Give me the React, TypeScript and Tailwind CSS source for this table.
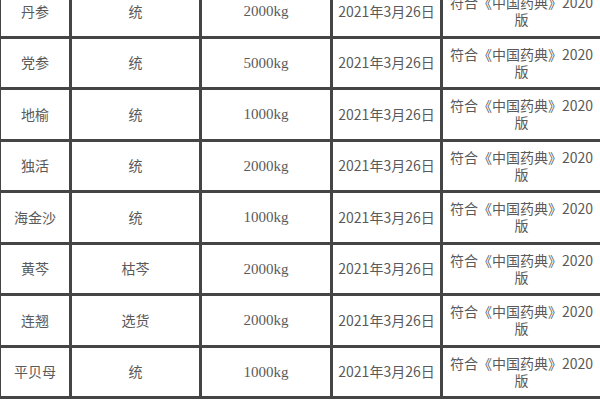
import React from 'react';

const rows = [
  ['丹参', '统', '2000kg'],
  ['党参', '统', '5000kg'],
  ['地榆', '统', '1000kg'],
  ['独活', '统', '2000kg'],
  ['海金沙', '统', '1000kg'],
  ['黄芩', '枯芩', '2000kg'],
  ['连翘', '选货', '2000kg'],
  ['平贝母', '统', '1000kg'],
];

const cjk = { fontFamily: '"Noto Sans CJK SC", "Noto Sans", sans-serif' };
const serif = { fontFamily: '"Liberation Serif", "Noto Sans CJK SC", serif' };

export default function App() {
  return (
    <div className="w-[600px] h-[400px] overflow-hidden bg-white">
      <table className="table-fixed border-collapse w-[602px] -mt-[16px] -ml-[2px] text-[14px] text-[#5a5a5a]" style={cjk}>
        <colgroup>
          <col className="w-[71px]" />
          <col className="w-[130px]" />
          <col className="w-[131px]" />
          <col className="w-[110px]" />
          <col className="w-[160px]" />
        </colgroup>
        <tbody>
          {rows.map(([name, grade, qty], i) => (
            <tr key={i} className="h-[51.5px]">
              <td className="border-[3px] border-[#454545] text-center p-0">{name}</td>
              <td className="border-[3px] border-[#454545] text-center p-0">{grade}</td>
              <td className="border-[3px] border-[#454545] text-center p-0 text-[15px]" style={serif}>{qty}</td>
              <td className="border-[3px] border-[#454545] text-center p-0">2021年3月26日</td>
              <td className="border-[3px] border-[#454545] text-center p-0 leading-[17px]">
                <span className="whitespace-nowrap">符合《中国药典》2020</span>
                <br />
                版
              </td>
            </tr>
          ))}
        </tbody>
      </table>
    </div>
  );
}
